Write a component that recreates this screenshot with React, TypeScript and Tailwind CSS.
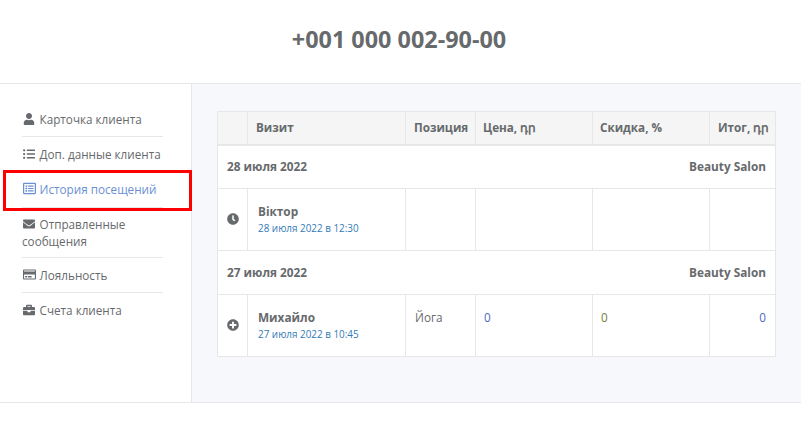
import { FaUser, FaListUl, FaRegListAlt, FaEnvelope, FaRegCreditCard, FaBriefcase, FaClock, FaPlusCircle } from "react-icons/fa";

const items = [
  { icon: <FaUser size={12} />, label: "Карточка клиента", h: "h-[35px]", pt: "pt-[9px]" },
  { icon: <FaListUl size={12} />, label: "Доп. данные клиента", h: "h-[35px]", pt: "pt-[9px]" },
  { icon: <FaRegListAlt size={13} />, label: "История посещений", h: "h-[36px]", pt: "pt-[9px]", active: true },
  { icon: <FaEnvelope size={12} />, label: "Отправленные сообщения", h: "h-[50px]", pt: "pt-[8px]" },
  { icon: <FaRegCreditCard size={13} />, label: "Лояльность", h: "h-[35px]", pt: "pt-[9px]" },
  { icon: <FaBriefcase size={12} />, label: "Счета клиента", h: "h-[35px]", pt: "pt-[9px]", last: true },
];

function DateRow({ date }: { date: string }) {
  return (
    <tr className="h-[44px] border-b border-[#e7e7e7]">
      <td colSpan={6} className="px-[9px] align-middle">
        <div className="flex justify-between text-[11.8px] font-bold text-[#676a6c]">
          <span>{date}</span>
          <span>Beauty Salon</span>
        </div>
      </td>
    </tr>
  );
}

function VisitRow({ icon, name, date, pos, values, last }: { icon: React.ReactNode; name: string; date: string; pos?: string; values?: boolean; last?: boolean }) {
  const cell = "border-l border-[#e7e7e7] align-top";
  return (
    <tr className={last ? "h-[62px]" : "h-[62px] border-b border-[#e7e7e7]"}>
      <td className="align-middle pl-[9px] pb-[2px] text-[#676a6c]">{icon}</td>
      <td className={`${cell} pl-[10px] pt-[14px]`}>
        <div className="text-[11.8px] leading-[16px] font-bold text-[#676a6c]">{name}</div>
        <div className="text-[9.9px] leading-[14px] mt-[2px] text-[#337ab7]">{date}</div>
      </td>
      <td className={`${cell} pl-[9px] pt-[13px] text-[11.7px] leading-[18px] text-[#676a6c]`}>{pos}</td>
      <td className={`${cell} pl-[8px] pt-[13px] text-[11.7px] leading-[18px] text-[#4a69bd]`}>{values ? "0" : ""}</td>
      <td className={`${cell} pl-[8px] pt-[13px] text-[11.7px] leading-[18px] text-[#6f7f3a]`}>{values ? "0" : ""}</td>
      <td className={`${cell} pr-[9px] pt-[13px] text-right text-[11.7px] leading-[18px] text-[#4a69bd]`}>{values ? "0" : ""}</td>
    </tr>
  );
}

export default function App() {
  const th = "border-l border-[#e7e7e7] text-[11.7px] font-bold text-[#676a6c] text-left pl-[8px] pt-[1px] whitespace-nowrap";
  return (
    <div className="w-[801px] h-[426px] overflow-hidden bg-white flex flex-col font-['Open_Sans',sans-serif] text-[#676a6c]">
      <header className="h-[84px] shrink-0 border-b border-[#e7e7e7] flex items-center justify-center pb-[3px] pr-[3px]">
        <h1 className="text-[23.4px] font-bold text-[#676a6c] leading-none">+001 000 002-90-00</h1>
      </header>
      <div className="h-[319px] shrink-0 flex border-b border-[#e7e7e7]">
        <aside className="w-[192px] shrink-0 border-r border-[#e7e7e7] pt-[18px] pl-[22px] pr-[28px] relative">
          {items.map((it) => (
            <div key={it.label} className={`${it.h} ${it.pt} ${it.last ? "" : "border-b border-[#e7e7e7]"} text-[11.7px] leading-[17px] ${it.active ? "text-[#6a8fd3]" : "text-[#676a6c]"}`}>
              <span className="inline-flex w-[14px] mr-[3.6px] align-[-1px] justify-start"><span className="inline-block pl-[1px]">{it.icon}</span></span>
              {it.label}
            </div>
          ))}
          <div className="absolute left-[3px] top-[86px] w-[189px] h-[41px] border-[3px] border-[#ff0000]" />
        </aside>
        <main className="flex-1 bg-[#f7f8fc] pl-[25px] pt-[27px]">
          <table className="w-[558px] table-fixed border border-[#e7e7e7] border-collapse bg-white">
            <colgroup>
              <col className="w-[30px]" />
              <col className="w-[158px]" />
              <col className="w-[70px]" />
              <col className="w-[117px]" />
              <col className="w-[117px]" />
              <col className="w-[66px]" />
            </colgroup>
            <thead>
              <tr className="h-[33px] bg-[#f5f5f5] border-b-2 border-[#e7e7e7]">
                <th />
                <th className={th}>Визит</th>
                <th className={th}>Позиция</th>
                <th className={`${th} !pl-[7px]`}>Цена, դր</th>
                <th className={`${th} !pl-[7px]`}>Скидка, %</th>
                <th className={`${th} text-right pr-[7px]`}>Итог, դր</th>
              </tr>
            </thead>
            <tbody>
              <DateRow date="28 июля 2022" />
              <VisitRow icon={<FaClock size={12} />} name="Віктор" date="28 июля 2022 в 12:30" />
              <DateRow date="27 июля 2022" />
              <VisitRow icon={<FaPlusCircle size={12} />} name="Михайло" date="27 июля 2022 в 10:45" pos="Йога" values last />
            </tbody>
          </table>
        </main>
      </div>
    </div>
  );
}
